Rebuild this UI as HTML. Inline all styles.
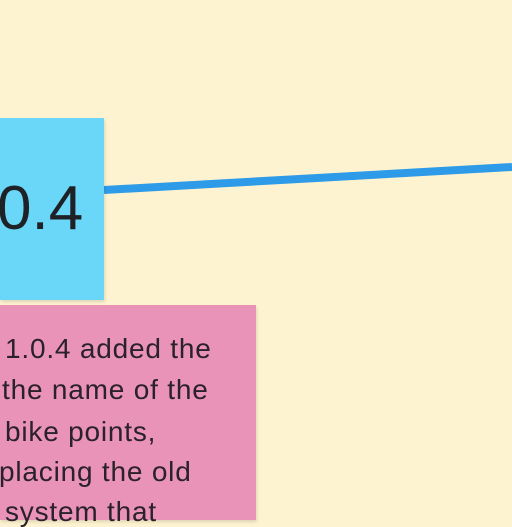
<!DOCTYPE html>
<html><head><style>
body{margin:0;width:512px;height:512px;overflow:hidden;background:#fef3d0;position:relative;font-family:"Liberation Sans",sans-serif}
.b{position:absolute;left:0;top:118px;width:104px;height:182px;background:#6bd7f8;box-shadow:1px 2px 3px rgba(0,0,0,.12)}
.p{position:absolute;left:0;top:305px;width:256px;height:215px;background:#e993b9;box-shadow:1px 2px 3px rgba(0,0,0,.12)}
.t{position:absolute;color:#2a2228;font-size:28px;letter-spacing:0.8px;white-space:nowrap;line-height:1}
</style></head><body>
<svg style="position:absolute;left:0;top:0" width="512" height="512"><line x1="104" y1="190" x2="512" y2="167" stroke="#2d9be8" stroke-width="8"/></svg>
<div class="b"></div>
<div class="t" style="left:-3px;top:178px;font-size:62px;letter-spacing:0;color:#1e2226">0.4</div>
<div class="p"></div>
<div class="t" style="left:5px;top:335px">1.0.4 added the</div>
<div class="t" style="left:2px;top:376px">the name of the</div>
<div class="t" style="left:5px;top:418px">bike points,</div>
<div class="t" style="left:-1px;top:458px">placing the old</div>
<div class="t" style="left:5px;top:498px">system that</div>
</body></html>
